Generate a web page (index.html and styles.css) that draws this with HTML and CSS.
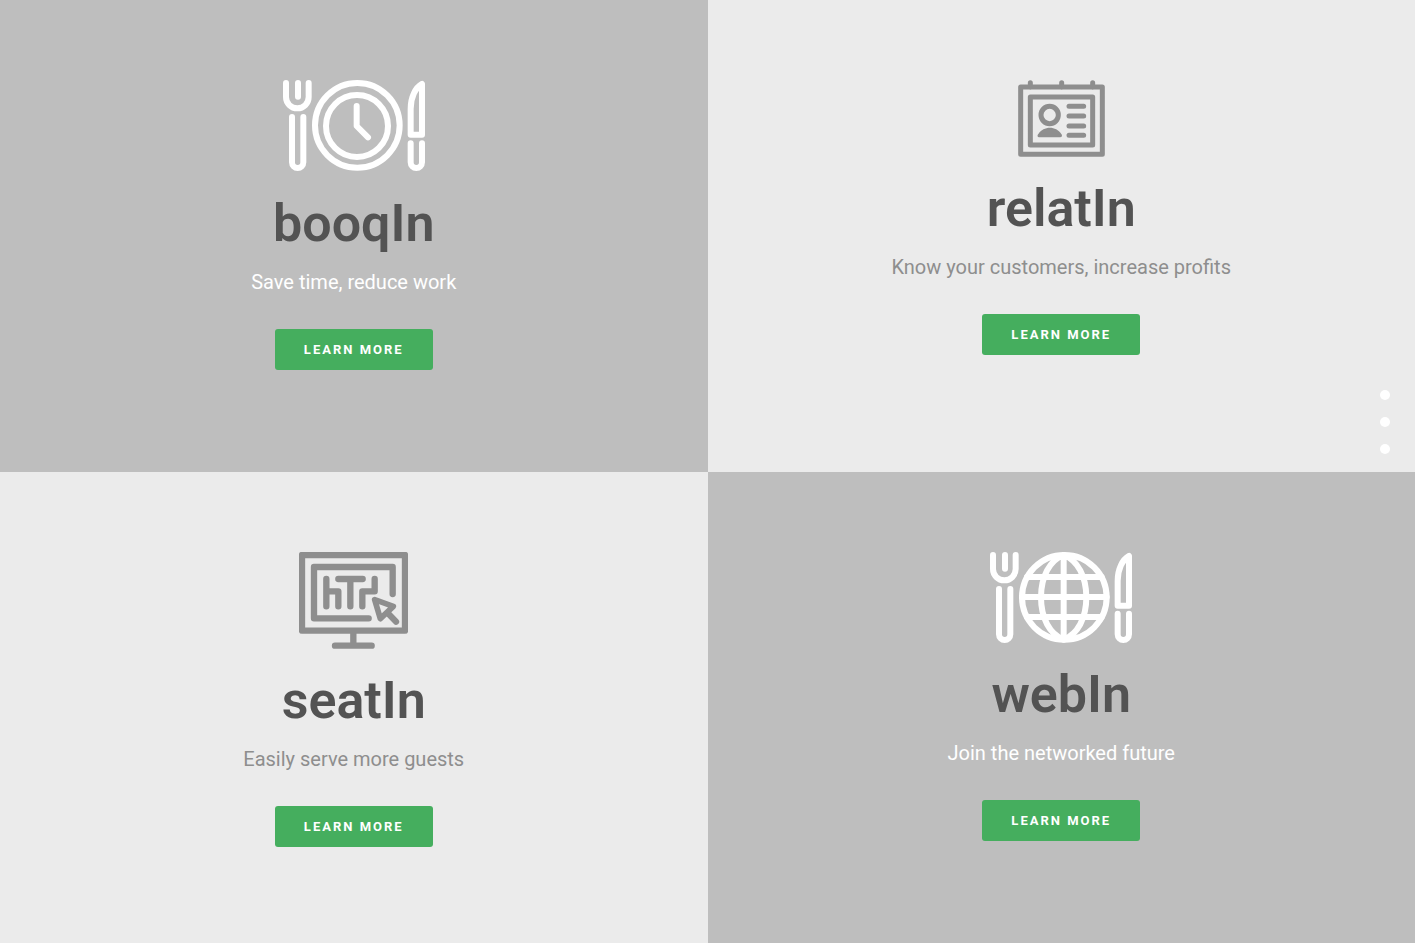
FILE: index.html
```html
<!DOCTYPE html>
<html lang="en">
<head>
<meta charset="utf-8">
<meta name="viewport" content="width=device-width, initial-scale=1">
<title>Products</title>
<link rel="stylesheet" href="styles.css">
</head>
<body>
<main class="products">
  <section class="product product-dark">
    <svg class="icon" width="142" height="92" viewBox="27 30 426 276" aria-hidden="true">
      <g class="stroke" stroke-width="18">
        <path d="M36 39V81A34 34 0 0 0 104 81V39M72 39V80M54 141V277A17 17 0 0 0 88 277V141"/>
        <circle cx="250" cy="166" r="127"/>
        <circle cx="249" cy="168" r="93"/>
        <path d="M248 108V168L282 202"/>
        <path d="M444 42V194H410V116C410 82 424 53 444 42ZM410 220V277A17 17 0 0 0 444 277V220"/>
      </g>
    </svg>
    <h2 class="name">booqIn</h2>
    <p class="tagline">Save time, reduce work</p>
    <a class="button" href="#booqin">LEARN MORE</a>
  </section>

  <section class="product product-light">
    <svg class="icon" width="87" height="77" viewBox="36 29 261 231" aria-hidden="true">
      <g class="stroke" stroke-width="15">
        <path d="M44 50H289V252H44ZM73 80H260V224H73ZM73 37V51M167 37V51M260 37V51M189 108H233M189 137H233M189 167H233M189 195H233"/>
        <circle cx="131" cy="134" r="26"/>
      </g>
      <path class="fill" d="M101 201C94 201 93 195 97 191C113 166 150 166 166 191C170 195 168 201 162 201Z"/>
    </svg>
    <h2 class="name">relatIn</h2>
    <p class="tagline">Know your customers, increase profits</p>
    <a class="button" href="#relatin">LEARN MORE</a>
  </section>

  <section class="product product-light">
    <svg class="icon" width="109" height="97" viewBox="27 30 327 291" aria-hidden="true">
      <g class="stroke" stroke-width="19">
        <path d="M36 39H345V266H36ZM190 268V310M135 311H245M236 229H72V75H308V156"/>
        <path d="M109 111V193M109 148H145V193M145 111H218M181 111V193M217 193V148H254V111"/>
        <path d="M297 217L318 239"/>
      </g>
      <path class="stroke" stroke-width="17" d="M254 173L310 193L271 230Z"/>
    </svg>
    <h2 class="name">seatIn</h2>
    <p class="tagline">Easily serve more guests</p>
    <a class="button" href="#seatin">LEARN MORE</a>
  </section>

  <section class="product product-dark">
    <svg class="icon" width="142" height="91" viewBox="27 30 426 273" aria-hidden="true">
      <g class="stroke" stroke-width="18">
        <path d="M36 39V81A34 34 0 0 0 104 81V39M72 39V80M54 141V277A17 17 0 0 0 88 277V141"/>
        <circle cx="250" cy="166" r="127"/>
        <path d="M248 39V293M123 165H377M138 105H362M138 225H362M248 39C206 55 180 104 180 166S206 277 248 293C290 277 316 228 316 166S290 55 248 39"/>
        <path d="M444 42V191H410V116C410 82 424 53 444 42ZM410 215V277A17 17 0 0 0 444 277V215"/>
      </g>
    </svg>
    <h2 class="name">webIn</h2>
    <p class="tagline">Join the networked future</p>
    <a class="button" href="#webin">LEARN MORE</a>
  </section>
</main>

<nav class="dots" aria-label="Page sections">
  <a class="dot" href="#first" aria-label="Section 1"></a>
  <a class="dot" href="#second" aria-label="Section 2"></a>
  <a class="dot" href="#third" aria-label="Section 3"></a>
</nav>
</body>
</html>
```
FILE: styles.css
```css
* {
  box-sizing: border-box;
}

body {
  margin: 0;
  font-family: Roboto, "Liberation Sans", sans-serif;
}

.products {
  display: grid;
  grid-template-columns: 1fr 1fr;
  grid-auto-rows: 1fr;
  min-height: 100vh;
}

.product {
  display: flex;
  flex-direction: column;
  align-items: center;
  padding: 80px 20px;
  text-align: center;
}

.product-dark {
  background: #bebebe;
  color: #fff;
}

.product-light {
  background: #ebebeb;
  color: #8e8e8e;
}

.icon {
  flex: none;
}

.stroke {
  fill: none;
  stroke: currentColor;
  stroke-linecap: round;
  stroke-linejoin: round;
}

.fill {
  fill: currentColor;
}

.name {
  margin: 22px 0 16px;
  color: #535353;
  font-size: 52px;
  font-weight: 600;
  line-height: 60px;
}

.tagline {
  margin: 0 0 35px;
  font-size: 20px;
  line-height: 24px;
}

.button {
  min-width: 158px;
  padding: 0 29px;
  border-radius: 3px;
  background: #45ae5e;
  color: #fff;
  font-size: 13px;
  font-weight: 700;
  letter-spacing: 2px;
  line-height: 41px;
  text-decoration: none;
}

.dots {
  position: fixed;
  top: 50%;
  right: 25px;
  display: grid;
  gap: 17px;
  transform: translateY(-50%);
  margin-top: -50px;
}

.dot {
  width: 10px;
  height: 10px;
  border-radius: 50%;
  background: #fff;
}
```
